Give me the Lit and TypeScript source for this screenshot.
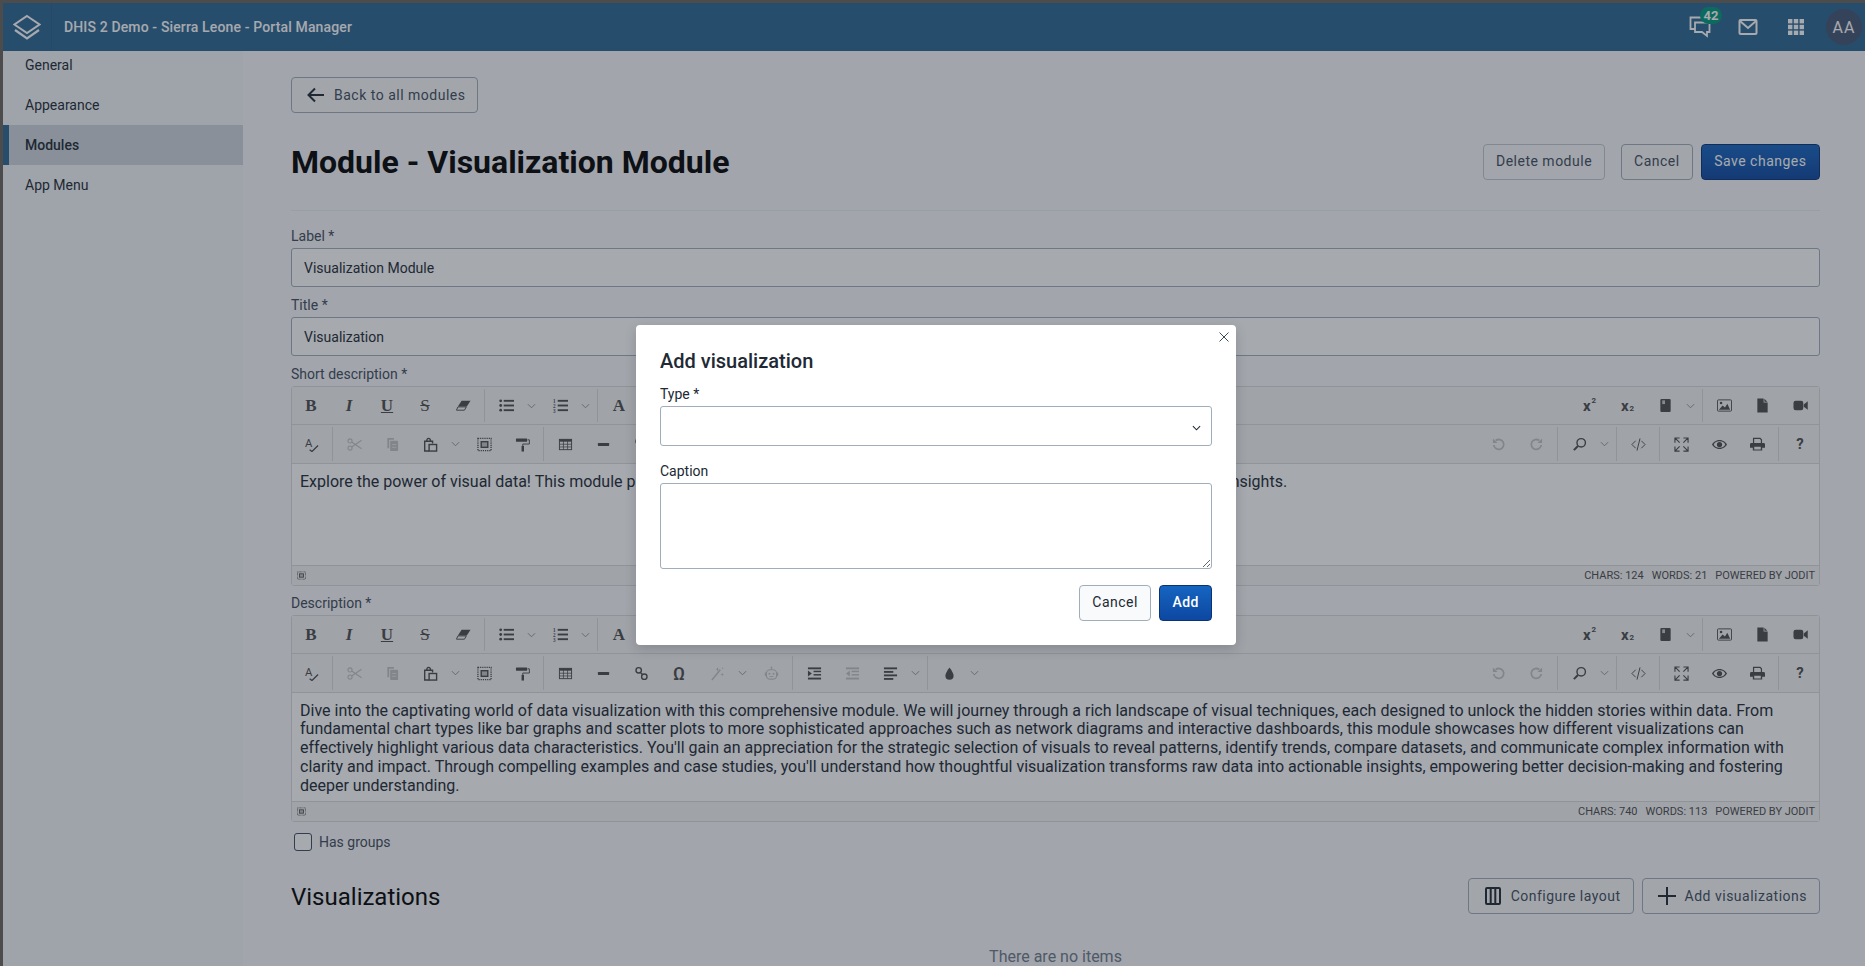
import { LitElement, html, svg, css } from "lit";
import { customElement } from "lit/decorators.js";

const icon = (body: unknown, cls = "") =>
  html`<svg class="icon ${cls}" viewBox="0 0 16 16" fill="currentColor">${body}</svg>`;

const icons: Record<string, unknown> = {
  eraser: icon(svg`<path d="M6 3h9.500l-4 6H2z"/><path d="M2 9.500h9L9 13H.5z" fill="none" stroke="currentColor"/>`),
  ul: icon(svg`<circle cx="1.800" cy="3" r="1.500"/><circle cx="1.800" cy="8" r="1.500"/><circle cx="1.800" cy="13" r="1.500"/><rect x="5" y="2" width="11" height="2"/><rect x="5" y="7" width="11" height="2"/><rect x="5" y="12" width="11" height="2"/>`),
  ol: icon(svg`<text x="0" y="5" font-size="5.500" font-weight="700">1</text><text x="0" y="10.500" font-size="5.500" font-weight="700">2</text><text x="0" y="16" font-size="5.500" font-weight="700">3</text><rect x="5" y="2" width="11" height="2"/><rect x="5" y="7" width="11" height="2"/><rect x="5" y="12" width="11" height="2"/>`),
  spell: icon(svg`<text x="1" y="11" font-size="12" font-family="Roboto, sans-serif">A</text><path d="M6 13.500l2.500 2L15 9" fill="none" stroke="currentColor" stroke-width="1.400"/>`),
  cut: icon(svg`<g fill="none" stroke="currentColor" stroke-width="1.200"><circle cx="3.200" cy="4.200" r="2.200"/><circle cx="3.200" cy="11.800" r="2.200"/><path d="M5 5.400L15.500 12.500M5 10.600L15.500 3.500"/></g>`),
  copy: icon(svg`<path d="M2.500 1h7v2H4.500v9h-2z"/><rect x="5.500" y="4" width="8.500" height="11" rx="1"/><path d="M7.500 8h4.500M7.500 11h4.500" stroke="#e4e4e4"/>`),
  paste: icon(svg`<g fill="none" stroke="currentColor" stroke-width="1.500"><path d="M6.500 15H1.800V4.500h8.400V7"/><path d="M4 4.500C4 2.800 4.800 1.500 6 1.500s2 1.300 2 3"/><rect x="6.500" y="8" width="8" height="7"/></g>`),
  selectall: icon(svg`<rect x="1" y="1.500" width="14" height="13" fill="none" stroke="currentColor" stroke-width="1.400" stroke-dasharray="1.300 1"/><rect x="4.500" y="5" width="7" height="6" fill="currentColor" fill-opacity=".3" stroke="currentColor" stroke-width="1.500"/>`),
  paint: icon(svg`<rect x="1" y="1.500" width="12" height="3.500" rx=".5"/><path d="M13.500 3h1.800v4.500H8.300v2" fill="none" stroke="currentColor" stroke-width="1"/><rect x="7" y="9.500" width="2.600" height="6"/>`),
  table: icon(svg`<rect x="1.500" y="2.500" width="13" height="11" fill="none" stroke="currentColor"/><path d="M1.500 2.500h13v2.500h-13z"/><path d="M1.500 7.700h13M1.500 10.600h13M5.800 2.500v11M10.200 2.500v11" stroke="currentColor" fill="none" stroke-width=".8"/>`),
  hr: icon(svg`<rect x="2" y="6.400" width="12" height="3.200" rx=".5"/>`),
  link: icon(svg`<g fill="none" stroke="currentColor" stroke-width="1.500"><circle cx="5" cy="4.600" r="2.900"/><circle cx="11" cy="11.400" r="2.900"/><path d="M6.700 6.800l2.600 2.600"/></g>`),
  magic: icon(svg`<path d="M2 15L11 4" stroke="currentColor" stroke-width="1.600" fill="none"/><path d="M8 1l.6 1.800L10 3.400 8.600 4 8 6 7.400 4 6 3.400l1.400-.6zM13 7l.5 1.400L15 9l-1.500.6L13 11l-.5-1.400L11 9l1.500-.6zM13.500 1l.3 1 1 .3-1 .3-.3 1-.3-1-1-.3 1-.3z"/>`),
  robot: icon(svg`<path d="M8 1v3" stroke="currentColor" fill="none"/><circle cx="8" cy="1.500" r="1"/><rect x="2.500" y="4" width="11" height="10" rx="4" fill="none" stroke="currentColor" stroke-width="1.300"/><circle cx="5.800" cy="8.300" r="1.100"/><circle cx="10.200" cy="8.300" r="1.100"/><path d="M6 11.200h4" stroke="currentColor" fill="none"/><rect x=".8" y="7" width="1.400" height="3.500"/><rect x="13.800" y="7" width="1.400" height="3.500"/>`),
  indent: icon(svg`<rect x="1" y="1.500" width="14" height="2"/><rect x="7" y="5" width="8" height="1.600"/><rect x="7" y="8.600" width="8" height="1.600"/><rect x="1" y="12.400" width="14" height="2"/><path d="M1 4.800L5.200 8 1 11.200z"/>`),
  outdent: icon(svg`<rect x="1" y="1.500" width="14" height="2"/><rect x="7" y="5" width="8" height="1.600"/><rect x="7" y="8.600" width="8" height="1.600"/><rect x="1" y="12.400" width="14" height="2"/><path d="M5.200 4.800L1 8l4.200 3.200z"/>`),
  align: icon(svg`<rect x="1" y="1.500" width="14" height="2"/><rect x="1" y="5.300" width="10" height="2"/><rect x="1" y="9" width="14" height="2"/><rect x="1" y="12.800" width="10" height="2"/>`),
  drop: icon(svg`<path d="M8 1.500C8 1.500 3.600 7.200 3.600 10.400a4.400 4.400 0 0 0 8.800 0C12.400 7.200 8 1.500 8 1.500z"/>`),
  book: icon(svg`<rect x="2.500" y="1" width="11" height="14" rx="1.200"/><path d="M4.500 2.500h3v4h-3z" fill="#c9c9c9"/>`),
  image: icon(svg`<rect x=".5" y="2" width="15" height="12" rx="1" fill="none" stroke="currentColor"/><path d="M2 12.500L6 8l2.500 2L11 6l3 6.500z"/><circle cx="4.300" cy="5.300" r="1.400"/>`),
  file: icon(svg`<path d="M2.500 .5H9.200v4.300h4.300v10.700h-11z"/><path d="M10 .8l3.200 3.200H10z"/>`),
  video: icon(svg`<rect x=".5" y="3" width="10.500" height="10" rx="2.400"/><path d="M11.500 6.800L15.700 3.400v9.200l-4.200-3.400z"/>`),
  undo: icon(svg`<path d="M3 8.500A5.300 5.300 0 1 0 5 3.800" fill="none" stroke="currentColor" stroke-width="1.900"/><path d="M2 1.500v5h5z"/>`),
  redo: icon(svg`<path d="M13 8.500A5.300 5.300 0 1 1 11 3.800" fill="none" stroke="currentColor" stroke-width="1.900"/><path d="M14 1.500v5H9z"/>`),
  find: icon(svg`<circle cx="9.800" cy="6.200" r="4.500" fill="none" stroke="currentColor" stroke-width="1.500"/><path d="M6.400 9.600L2 14" stroke="currentColor" stroke-width="2.200"/>`),
  code: icon(svg`<path d="M5 4L1 8l4 4M11 4l4 4-4 4M9.600 1.500L6.400 14.500" fill="none" stroke="currentColor" stroke-width="1"/>`),
  full: icon(svg`<g fill="none" stroke="currentColor" stroke-width="1.200"><path d="M1 6V1h5M1 1l5 5M15 6V1h-5M15 1l-5 5M1 10v5h5M1 15l5-5M15 10v5h-5M15 15l-5-5"/></g>`),
  eye: icon(svg`<path fill-rule="evenodd" d="M8 3.200C12 3.200 15 6 16 8c-1 2-4 4.800-8 4.800S1 10 0 8c1-2 4-4.800 8-4.800zm0 1.300A6.800 6.800 0 0 0 1.800 8 6.800 6.800 0 0 0 8 11.500 6.800 6.800 0 0 0 14.200 8 6.800 6.800 0 0 0 8 4.500z"/><circle cx="8" cy="8" r="2.800"/>`),
  print: icon(svg`<path d="M3.800 6.500V1.500h7l1.400 1.400v3.600" fill="none" stroke="currentColor" stroke-width="1.300"/><path fill-rule="evenodd" d="M1.500 6.500h13A1.500 1.500 0 0 1 16 8v3.500h-3v3H3v-3H0V8A1.500 1.500 0 0 1 1.500 6.500zM4.500 10.500v2.700h7v-2.700z"/>`),
};

const chevron = html`<svg class="chev" viewBox="0 0 10 6"><path d="M1 1l4 4 4-4" fill="none" stroke="currentColor"/></svg>`;

const shortText =
  "Explore the power of visual data! This module presents a well curated variety of charts and graphs to help you discover meaningful insights.";
const longText =
  "Dive into the captivating world of data visualization with this comprehensive module. We will journey through a rich landscape of visual techniques, each designed to unlock the hidden stories within data. From fundamental chart types like bar graphs and scatter plots to more sophisticated approaches such as network diagrams and interactive dashboards, this module showcases how different visualizations can effectively highlight various data characteristics. You'll gain an appreciation for the strategic selection of visuals to reveal patterns, identify trends, compare datasets, and communicate complex information with clarity and impact. Through compelling examples and case studies, you'll understand how thoughtful visualization transforms raw data into actionable insights, empowering better decision-making and fostering deeper understanding.";

@customElement("rich-editor")
export class RichEditor extends LitElement {
  static properties = {
    text: { type: String },
    chars: { type: Number },
    words: { type: Number },
  };

  text = "";
  chars = 0;
  words = 0;

  static styles = css`
    :host {
      display: block;
      border: 1px solid #dadada;
      border-radius: 3px;
      background: #fff;
      color: #4c4c4c;
    }
    .row {
      display: flex;
      align-items: stretch;
      height: 37px;
      background: #f6f6f6;
      border-bottom: 1px solid #dadada;
    }
    .row.second {
      height: 38px;
    }
    .spacer {
      flex: 1;
    }
    .btn {
      width: 38px;
      display: flex;
      align-items: center;
      justify-content: center;
      font-family: "Liberation Serif", serif;
      font-size: 17px;
    }
    .btn.off {
      color: #c4c4c4;
    }
    .bold {
      font-weight: 700;
    }
    .italic {
      font-style: italic;
      font-weight: 700;
    }
    .under {
      text-decoration: underline;
      font-weight: 700;
    }
    .strike {
      text-decoration: line-through;
      font-weight: 400;
    }
    .sans {
      font-family: Roboto, sans-serif;
      font-weight: 700;
      font-size: 15px;
    }
    .sans small {
      font-size: 8px;
      position: relative;
      top: -5px;
      left: 1px;
    }
    .sans small.down {
      top: 3px;
    }
    .omega {
      font-family: Roboto, sans-serif;
      font-size: 18px;
      font-weight: 500;
    }
    .drop {
      width: 14px;
      padding-left: 2px;
      display: flex;
      align-items: center;
      color: #8a8a8a;
    }
    .sep {
      width: 5px;
      display: flex;
      justify-content: center;
      margin: 2px 0;
    }
    .sep::before {
      content: "";
      width: 1px;
      background: #dadada;
    }
    .icon {
      width: 15px;
      height: 15px;
    }
    .chev {
      width: 9px;
      height: 6px;
    }
    .content {
      padding: 8.500px 8px 0;
      height: var(--content-height, 85px);
      box-sizing: border-box;
      font: 16px/18.750px Roboto, sans-serif;
      color: #212934;
    }
    .status {
      height: 19px;
      border-top: 1px solid #dadada;
      background: #f6f6f6;
      display: flex;
      align-items: center;
      justify-content: space-between;
      padding: 0 4px 0 5px;
      font: 11px Roboto, sans-serif;
      text-transform: uppercase;
    }
    .status .icon {
      width: 9px;
      height: 9px;
    }
    .status div {
      display: flex;
      gap: 8px;
    }
  `;

  private b(name: string, off = false) {
    return html`<span class="btn ${off ? "off" : ""}">${icons[name]}</span>`;
  }

  render() {
    return html`
      <div class="row">
        <span class="btn bold">B</span>
        <span class="btn italic">I</span>
        <span class="btn under">U</span>
        <span class="btn strike">S</span>
        ${this.b("eraser")}
        <span class="sep"></span>
        ${this.b("ul")}<span class="drop">${chevron}</span>
        ${this.b("ol")}<span class="drop">${chevron}</span>
        <span class="sep"></span>
        <span class="btn bold">A</span>
        <span class="spacer"></span>
        <span class="btn sans">x<small>2</small></span>
        <span class="btn sans">x<small class="down">2</small></span>
        ${this.b("book")}<span class="drop">${chevron}</span>
        <span class="sep"></span>
        ${this.b("image")}${this.b("file")}${this.b("video")}
      </div>
      <div class="row second">
        ${this.b("spell")}
        <span class="sep"></span>
        ${this.b("cut", true)}${this.b("copy", true)}
        ${this.b("paste")}<span class="drop">${chevron}</span>
        ${this.b("selectall")}${this.b("paint")}
        <span class="sep"></span>
        ${this.b("table")}${this.b("hr")}${this.b("link")}
        <span class="btn omega">Ω</span>
        ${this.b("magic", true)}<span class="drop">${chevron}</span>
        ${this.b("robot", true)}
        <span class="sep"></span>
        ${this.b("indent")}${this.b("outdent", true)}
        ${this.b("align")}<span class="drop">${chevron}</span>
        <span class="sep"></span>
        ${this.b("drop")}<span class="drop">${chevron}</span>
        <span class="spacer"></span>
        ${this.b("undo", true)}${this.b("redo", true)}
        <span class="sep"></span>
        ${this.b("find")}<span class="drop">${chevron}</span>
        <span class="sep"></span>
        ${this.b("code")}
        <span class="sep"></span>
        ${this.b("full")}${this.b("eye")}${this.b("print")}
        <span class="sep"></span>
        <span class="btn sans">?</span>
      </div>
      <div class="content">${this.text}</div>
      <div class="status">
        ${icons.selectall}
        <div>
          <span>Chars: ${this.chars}</span>
          <span>Words: ${this.words}</span>
          <span>Powered by Jodit</span>
        </div>
      </div>
    `;
  }
}

@customElement("app-root")
export class AppRoot extends LitElement {
  static styles = css`
    :host {
      display: block;
      position: relative;
      height: 966px;
      box-sizing: border-box;
      padding: 3px 0 0 3px;
      overflow: hidden;
      background: #4c4c4c;
      font-family: Roboto, sans-serif;
      font-size: 14px;
      color: #212934;
    }
    .header {
      height: 48px;
      background: #2c6693;
      color: #fff;
      display: flex;
      align-items: center;
    }
    .logo {
      width: 48px;
      height: 48px;
      display: flex;
      align-items: center;
      justify-content: center;
      border-right: 1px solid #28608b;
    }
    .logo svg {
      width: 28px;
      height: 28px;
    }
    .app-title {
      margin-left: 12px;
      flex: 1;
      font-weight: 500;
      letter-spacing: 0.140px;
    }
    .head-btn {
      position: relative;
      width: 48px;
      height: 48px;
      display: flex;
      align-items: center;
      justify-content: center;
    }
    .head-btn svg {
      width: 24px;
      height: 24px;
    }
    .badge {
      position: absolute;
      top: 4px;
      left: 24px;
      min-width: 22px;
      height: 17px;
      border-radius: 9px;
      background: #00977a;
      color: #fff;
      font-size: 13px;
      font-weight: 700;
      line-height: 17px;
      text-align: center;
    }
    .avatar {
      width: 36px;
      height: 36px;
      margin: 0 3px 0 6px;
      border-radius: 50%;
      background: #445573;
      display: flex;
      align-items: center;
      justify-content: center;
      font-size: 16px;
      letter-spacing: 1px;
    }
    .body {
      display: flex;
      height: 915px;
      overflow: hidden;
    }
    .sidebar {
      width: 240px;
      flex: none;
      background: #f4f6f8;
    }
    .nav {
      margin-top: -6px;
    }
    .nav div {
      height: 40px;
      display: flex;
      align-items: center;
      padding-left: 22px;
    }
    .nav .active {
      background: #d0d5dc;
      font-weight: 500;
      border-left: 6px solid #2c6693;
      padding-left: 16px;
    }
    .main {
      flex: 1;
      padding: 26px 45px 0 48px;
      background: #f8f9fa;
    }
    .button {
      display: inline-flex;
      align-items: center;
      height: 36px;
      box-sizing: border-box;
      padding: 0 12px;
      border: 1px solid #a0adba;
      border-radius: 4px;
      background: #f9fafb;
      color: #404b5a;
      letter-spacing: 0.500px;
      white-space: nowrap;
    }
    .button svg {
      width: 24px;
      height: 24px;
      margin: 0 6px 0 0;
    }
    .button.muted {
      border-color: #c4c9d0;
      background: #f8f9fa;
    }
    .button.primary {
      background: linear-gradient(#1565c0, #0d47a1);
      border-color: #093371;
      color: #fff;
      font-weight: 500;
    }
    .title-row {
      display: flex;
      align-items: center;
      margin-top: 31px;
      padding-bottom: 30px;
      border-bottom: 1px solid #e8edf2;
    }
    .title-row .button,
    .modal-actions .button {
      padding-bottom: 2px;
    }
    .title-row .primary {
      font-weight: 400;
      padding-left: 12.500px;
      padding-right: 12.500px;
    }
    h1 {
      flex: 1;
      margin: 0;
      font-size: 32px;
      line-height: 36px;
      font-weight: 700;
      color: #000;
    }
    .actions {
      display: flex;
      gap: 8px;
    }
    .actions .spaced {
      margin-right: 8px;
    }
    .form {
      padding-top: 7px;
    }
    .field {
      margin-top: 6px;
    }
    .field.after-editor {
      margin-top: 5px;
    }
    label {
      display: block;
      height: 22px;
      line-height: 24px;
      margin-bottom: 2px;
      color: #404b5a;
    }
    .input {
      display: block;
      width: 100%;
      height: 39px;
      box-sizing: border-box;
      padding: 0 12px;
      border: 1px solid #a0adba;
      border-radius: 3px;
      background: #fff;
      color: #212934;
      font: 14px Roboto, sans-serif;
    }
    rich-editor.short {
      --content-height: 101px;
    }
    rich-editor.long {
      --content-height: 108px;
    }
    .check {
      display: flex;
      align-items: center;
      gap: 7px;
      margin: 11px 0 0 3px;
      color: #404b5a;
    }
    .check span {
      width: 16px;
      height: 16px;
      border: 1px solid #404b5a;
      border-radius: 3px;
      background: #fff;
    }
    .section {
      display: flex;
      align-items: center;
      margin-top: 27px;
    }
    h2 {
      flex: 1;
      margin: 0;
      padding-top: 2px;
      font-size: 24px;
      font-weight: 400;
      color: #000;
    }
    .empty {
      margin-top: 33px;
      text-align: center;
      font-size: 16px;
      color: #6e7a8a;
    }
    .overlay {
      position: absolute;
      inset: 3px 0 0 3px;
      background: rgba(33, 41, 52, 0.4);
    }
    .modal {
      position: absolute;
      left: 633px;
      top: 322px;
      width: 600px;
      height: 320px;
      box-sizing: border-box;
      padding: 24px;
      border-radius: 4px;
      background: #fff;
      box-shadow: 0 4px 12px rgba(33, 41, 52, 0.2);
    }
    .close {
      position: absolute;
      top: 6px;
      right: 6px;
      width: 12px;
      height: 12px;
      color: #404b5a;
    }
    .modal h3 {
      margin: 0 0 9px;
      font-size: 20px;
      line-height: 24px;
      font-weight: 500;
      color: #212934;
    }
    .modal label {
      color: #212934;
    }
    .select {
      height: 40px;
      box-sizing: border-box;
      border: 1px solid #a0adba;
      border-radius: 3px;
      display: flex;
      align-items: center;
      justify-content: flex-end;
      padding: 4px 10px 0 0;
    }
    .select svg {
      width: 9px;
      height: 6px;
      color: #212934;
    }
    .modal .caption {
      margin-top: 13px;
    }
    textarea {
      display: block;
      width: 100%;
      height: 86px;
      box-sizing: border-box;
      margin: 0;
      border: 1px solid #a0adba;
      border-radius: 3px;
      resize: vertical;
      outline: none;
    }
    .modal-actions {
      display: flex;
      justify-content: flex-end;
      gap: 8px;
      margin-top: 16px;
    }
    .modal-actions .button {
      color: #212934;
      padding-left: 12.500px;
      padding-right: 12.500px;
    }
    .modal-actions .primary {
      color: #fff;
      padding-left: 12px;
      padding-right: 12px;
    }
  `;

  render() {
    return html`
      <div class="header">
        <div class="logo">
          <svg viewBox="0 0 28 28" fill="none" stroke="#fff" stroke-width="2">
            <path d="M14 3L26.500 11.500 14 20 1.500 11.500z" />
            <path d="M2 17L14 25.500 26 17" stroke-width="2.200" />
          </svg>
        </div>
        <div class="app-title">DHIS 2 Demo - Sierra Leone - Portal Manager</div>
        <div class="head-btn">
          <svg viewBox="0 0 24 24" fill="none" stroke="#fff" stroke-width="1.800">
            <path d="M7 14H2.500V2.500H17V7" />
            <path d="M7 7.500H21.500V17H19V21L14 17H7z" />
          </svg>
          <span class="badge">42</span>
        </div>
        <div class="head-btn">
          <svg viewBox="0 0 24 24" fill="none" stroke="#fff" stroke-width="2">
            <rect x="3.500" y="5" width="17" height="14" rx="1" />
            <path d="M4 6l8 7 8-7" />
          </svg>
        </div>
        <div class="head-btn">
          <svg viewBox="0 0 24 24" fill="#fff">
            <rect x="4" y="4" width="4.400" height="4.400" />
            <rect x="9.800" y="4" width="4.400" height="4.400" />
            <rect x="15.600" y="4" width="4.400" height="4.400" />
            <rect x="4" y="9.800" width="4.400" height="4.400" />
            <rect x="9.800" y="9.800" width="4.400" height="4.400" />
            <rect x="15.600" y="9.800" width="4.400" height="4.400" />
            <rect x="4" y="15.600" width="4.400" height="4.400" />
            <rect x="9.800" y="15.600" width="4.400" height="4.400" />
            <rect x="15.600" y="15.600" width="4.400" height="4.400" />
          </svg>
        </div>
        <div class="avatar">AA</div>
      </div>
      <div class="body">
        <div class="sidebar">
          <div class="nav">
            <div>General</div>
            <div>Appearance</div>
            <div class="active">Modules</div>
            <div>App Menu</div>
          </div>
        </div>
        <div class="main">
          <span class="button">
            <svg viewBox="0 0 24 24" fill="none" stroke="#212934" stroke-width="2">
              <path d="M20 12H5M11 5.500L4.500 12 11 18.500" />
            </svg>
            Back to all modules
          </span>
          <div class="title-row">
            <h1>Module - Visualization Module</h1>
            <div class="actions">
              <span class="button muted spaced">Delete module</span>
              <span class="button">Cancel</span>
              <span class="button primary">Save changes</span>
            </div>
          </div>
          <div class="form">
            <div class="field">
              <label>Label *</label>
              <input class="input" value="Visualization Module" />
            </div>
            <div class="field">
              <label>Title *</label>
              <input class="input" value="Visualization" />
            </div>
            <div class="field">
              <label>Short description *</label>
              <rich-editor class="short" .text=${shortText} .chars=${124} .words=${21}></rich-editor>
            </div>
            <div class="field after-editor">
              <label>Description *</label>
              <rich-editor class="long" .text=${longText} .chars=${740} .words=${113}></rich-editor>
            </div>
            <div class="check"><span></span>Has groups</div>
            <div class="section">
              <h2>Visualizations</h2>
              <div class="actions">
                <span class="button">
                  <svg viewBox="0 0 24 24" fill="none" stroke="#212934" stroke-width="2">
                    <rect x="5" y="4" width="14" height="16" rx="1" />
                    <path d="M9.700 4v16M14.300 4v16" />
                  </svg>
                  Configure layout
                </span>
                <span class="button">
                  <svg viewBox="0 0 24 24" fill="none" stroke="#212934" stroke-width="2">
                    <path d="M12 3v18M3 12h18" />
                  </svg>
                  Add visualizations
                </span>
              </div>
            </div>
            <div class="empty">There are no items</div>
          </div>
        </div>
      </div>
      <div class="overlay">
        <div class="modal">
          <svg class="close" viewBox="0 0 12 12" fill="none" stroke="currentColor">
            <path d="M1.500 1.500l9 9M10.500 1.500l-9 9" />
          </svg>
          <h3>Add visualization</h3>
          <label>Type *</label>
          <div class="select">
            <svg viewBox="0 0 10 6"><path d="M1 1l4 4 4-4" fill="none" stroke="currentColor" stroke-width="1.200" /></svg>
          </div>
          <label class="caption">Caption</label>
          <textarea></textarea>
          <div class="modal-actions">
            <span class="button">Cancel</span>
            <span class="button primary">Add</span>
          </div>
        </div>
      </div>
    `;
  }
}
